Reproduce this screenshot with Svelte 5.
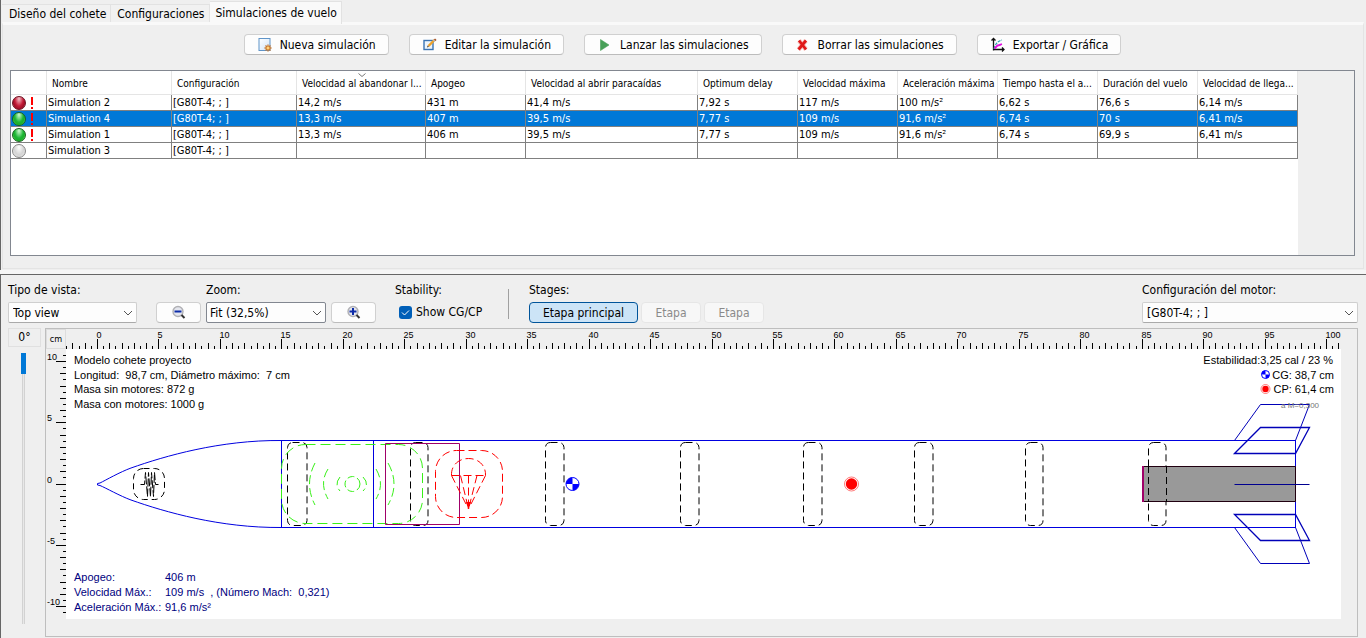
<script>
  const tabs = ['Diseño del cohete', 'Configuraciones', 'Simulaciones de vuelo'];
  const actions = [
    { icon: 'new', label: 'Nueva simulación' },
    { icon: 'edit', label: 'Editar la simulación' },
    { icon: 'run', label: 'Lanzar las simulaciones' },
    { icon: 'delete', label: 'Borrar las simulaciones' },
    { icon: 'plot', label: 'Exportar / Gráfica' }
  ];
  const columns = [
    { w: 36, t: '' },
    { w: 125, t: 'Nombre' },
    { w: 125, t: 'Configuración' },
    { w: 129, t: 'Velocidad al abandonar l...', sorted: true },
    { w: 100, t: 'Apogeo' },
    { w: 172, t: 'Velocidad al abrir paracaídas' },
    { w: 100, t: 'Optimum delay' },
    { w: 100, t: 'Velocidad máxima' },
    { w: 100, t: 'Aceleración máxima' },
    { w: 100, t: 'Tiempo hasta el a...' },
    { w: 100, t: 'Duración del vuelo' },
    { w: 100, t: 'Velocidad de llega...' }
  ];
  const rows = [
    { s: 'red', warn: true, c: ['Simulation 2', '[G80T-4; ; ]', '14,2 m/s', '431 m', '41,4 m/s', '7,92 s', '117 m/s', '100 m/s²', '6,62 s', '76,6 s', '6,14 m/s'] },
    { s: 'green', warn: true, sel: true, c: ['Simulation 4', '[G80T-4; ; ]', '13,3 m/s', '407 m', '39,5 m/s', '7,77 s', '109 m/s', '91,6 m/s²', '6,74 s', '70 s', '6,41 m/s'] },
    { s: 'green', warn: true, c: ['Simulation 1', '[G80T-4; ; ]', '13,3 m/s', '406 m', '39,5 m/s', '7,77 s', '109 m/s', '91,6 m/s²', '6,74 s', '69,9 s', '6,41 m/s'] },
    { s: 'gray', warn: false, c: ['Simulation 3', '[G80T-4; ; ]', '', '', '', '', '', '', '', '', ''] }
  ];

  // Ruler ticks every half centimetre
  const hTicks = [];
  for (let i = -5; i <= 202; i++) {
    const x = Math.floor(31.5 + i * 6.145) + 0.5;
    if (x < 1275) hTicks.push({ i, x, len: i % 10 === 0 ? 10 : i % 2 === 0 ? 6 : 3 });
  }
  const vTicks = [];
  for (let i = -21; i <= 21; i++) {
    vTicks.push({ i, y: Math.floor(135 - i * 6.125) + 0.5, len: i % 10 === 0 ? 10 : i % 2 === 0 ? 6 : 3 });
  }
  const rings = [[287, 20], [410, 18], [545, 19], [680, 19], [803, 19], [914, 19], [1025, 18], [1148, 18]];
</script>

{#snippet chevron()}
  <svg class="chev" width="10" height="6" viewBox="0 0 10 6"><path d="M1 1l4 4 4-4" fill="none" stroke="#555" /></svg>
{/snippet}

{#snippet lens(plus)}
  <svg width="16" height="16" viewBox="0 0 16 16">
    <circle cx="7" cy="6.5" r="5" fill="#e4e6ee" stroke="#b0b0b4" stroke-width="1.4" />
    <path d="M10.5 10l3 3" stroke="#333" stroke-width="2" />
    <path d="M3.5 6.5h7" stroke="#0c2ba8" stroke-width="2" />
    {#if plus}<path d="M7 3v7" stroke="#0c2ba8" stroke-width="2" />{/if}
  </svg>
{/snippet}

<div class="app">
  <section class="top">
    <div class="tabs" role="tablist">
      {#each tabs as t, i}
        <button role="tab" class="tab" class:active={i === 2} aria-selected={i === 2}>{t}</button>
      {/each}
    </div>
    <div class="panel">
      <div class="actions">
        {#each actions as a}
          <button class="btn action">
            <svg width="16" height="16" viewBox="0 0 16 16">
              {#if a.icon === 'new'}
                <defs><linearGradient id="pg" x2="1" y2="1"><stop stop-color="#fff" /><stop offset="1" stop-color="#cfe4fa" /></linearGradient></defs>
                <rect x="2" y="1.5" width="11" height="12" fill="url(#pg)" stroke="#5f94c8" />
                <path d="M11 7.500v7M7.500 11h7M8.500 8.500l5 5M13.500 8.500l-5 5" stroke="#c8762c" stroke-width="1.300" />
                <circle cx="11" cy="11" r="1.500" fill="#ffd27a" />
              {:else if a.icon === 'edit'}
                <rect x="2" y="3.500" width="9" height="9" fill="#eef5fc" stroke="#3a74b4" stroke-width="1.400" />
                <path d="M6.500 9L12.500 3" stroke="#eda22c" stroke-width="2.400" />
                <path d="M11.500 3l1.500 1.500" stroke="#b9c0c8" stroke-width="1.300" />
                <path d="M12.500 2l1.500 1.500" stroke="#a04a20" stroke-width="1.600" />
                <path d="M5 10.500l2-.8-1.300-1.300z" fill="#333" />
              {:else if a.icon === 'run'}
                <path d="M3.500 2.500v11l8.500-5.500z" fill="#48a058" stroke="#48a058" stroke-width=".6" />
              {:else if a.icon === 'delete'}
                <path d="M4 3.500l7 9M11 3.500l-7.500 9" stroke="#f6c4c0" stroke-width="4.500" />
                <path d="M4 3.500l7 9M11 3.500l-7.500 9" stroke="#e01818" stroke-width="2.800" />
              {:else}
                <path d="M3.500 13.500V1.500M1.500 3.500l2-2 2 2M3 12.500h11M12 10.500l2 2-2 2" fill="none" stroke="#111" stroke-width="1.300" />
                <path d="M4 12c1-5 4-8 8-9" fill="none" stroke="#2aa4b0" stroke-width="1.200" stroke-dasharray="3 1" />
                <path d="M4.500 11.500l3-3c2 0 3-1 4.500-1.500" fill="none" stroke="#e010e0" stroke-width="1.800" />
              {/if}
            </svg>
            <span>{a.label}</span>
          </button>
        {/each}
      </div>

      <div class="scroll">
        <div class="sheet">
          <table>
            <colgroup>{#each columns as c}<col style="width:{c.w}px" />{/each}</colgroup>
            <thead>
              <tr>
                {#each columns as c}
                  <th>
                    {c.t}
                    {#if c.sorted}<svg class="sort" width="8" height="5" viewBox="0 0 8 5"><path d="M.5.5l3.500 3 3.500-3" fill="none" stroke="#777" /></svg>{/if}
                  </th>
                {/each}
              </tr>
            </thead>
            <tbody>
              {#each rows as r}
                <tr class:sel={r.sel}>
                  <td class="status">
                    <span class="state"><span class="ball {r.s}"></span>
                    {#if r.warn}<svg width="4" height="12" viewBox="0 0 4 12"><path d="M1 0h2v8H1zM1 10h2v2H1z" fill="#f00" /></svg>{/if}</span>
                  </td>
                  {#each r.c as v}<td>{v}</td>{/each}
                </tr>
              {/each}
            </tbody>
          </table>
        </div>
      </div>
    </div>
  </section>

  <section class="bottom">
    <div class="toolbar">
      <div class="field view">
        <label for="view">Tipo de vista:</label>
        <div class="combo"><select id="view"><option>Top view</option></select>{@render chevron()}</div>
      </div>
      <div class="zoom">
        <label for="zoom">Zoom:</label>
        <button class="btn zo" aria-label="Alejar">{@render lens(false)}</button>
        <div class="combo dark"><select id="zoom"><option>Fit (32,5%)</option></select>{@render chevron()}</div>
        <button class="btn" aria-label="Acercar">{@render lens(true)}</button>
      </div>
      <div class="field stability">
        <span>Stability:</span>
        <label class="check">
          <span class="tick"><input type="checkbox" checked /><svg width="13" height="13" viewBox="0 0 13 13"><path d="M3 6.500l2.500 2.500 4.500-4.500" fill="none" stroke="#fff" /></svg></span>
          Show CG/CP
        </label>
      </div>
      <div class="rule"></div>
      <div class="field">
        <span>Stages:</span>
        <div class="stages">
          <button class="btn main">Etapa principal</button>
          <button class="btn" disabled>Etapa</button>
          <button class="btn" disabled>Etapa</button>
        </div>
      </div>
      <div class="field motor">
        <label for="motor">Configuración del motor:</label>
        <div class="combo"><select id="motor"><option>[G80T-4; ; ]</option></select>{@render chevron()}</div>
      </div>
    </div>

    <div class="design">
      <div class="rotation">
        <label class="deg" for="rot">0°</label>
        <input id="rot" type="range" min="0" max="360" value="0" />
      </div>
      <div class="view-pane">
        <div class="unit">cm</div>
        <svg class="ruler" width="1275" height="20">
          {#each hTicks as t}
            <path d="M{t.x} {20 - t.len}V20" stroke="#000" />
            {#if t.len === 10}<text x={t.x - 1} y="9">{t.i / 2}</text>{/if}
          {/each}
        </svg>
        <svg class="ruler" width="20" height="270">
          {#each vTicks as t}
            <path d="M{20 - t.len} {t.y}H20" stroke="#000" />
            {#if t.len === 10}<text x="1" y={t.y - 1.5}>{t.i / 2}</text>{/if}
          {/each}
        </svg>
        <svg class="canvas" width="1275" height="270" viewBox="66 349 1275 270">
          <g fill="none" stroke="#0000e0">
            <path d="M281.500 440.500C220 440 165 456 131 468C120 472 106 480 100 483L97.500 483.500V485L100 485.500C106 488 120 496 131 500C165 512 220 528 281.500 527.500" />
            <path d="M281.500 440.500H1295.500V527.500H281.500zM373.500 440.500v87" shape-rendering="crispEdges" />
          </g>
          <g fill="none" stroke="#000" stroke-dasharray="7 4">
            {#each rings as [x, w]}
              <rect x={x + 0.5} y="442.500" width={w - 0.5} height="83" rx="5" />
            {/each}
            <rect x="133.500" y="468.500" width="31" height="31" rx="10" stroke-dasharray="6 4" />
            <path d="M140.500 484.500h4l1-12l2 24l1-24l2 24l1-24l2 24l1-24l1 12h3" stroke-dasharray="8 2" />
          </g>
          <g fill="none" stroke="#38f018" stroke-dasharray="10 5">
            <rect x="281.500" y="444.500" width="141" height="79" rx="24" />
            <circle cx="352.500" cy="484" r="7.500" stroke-dasharray="7 3" />
            <path d="M340 477q-6 7 0 14M328 469q-9 14 0 30M315 463q-11 21 0 42M363 477q7 7 0 14M376 469q9 15 0 30M388 463q12 21 0 42" stroke-dasharray="9 4" />
          </g>
          <path d="M385.500 443.500h74v81h-74z" fill="none" stroke="#a00068" />
          <g fill="none" stroke="#f00" stroke-dasharray="8 4">
            <rect x="435.500" y="450.500" width="67" height="67" rx="21" />
            <path d="M451.500 475.500C451 465 459 458.500 468.500 458.500S486 465 485.500 475.500" />
            <path d="M451.500 475.500h34M451.500 475.500L468.500 509M460.500 475.500L468.500 509M468.500 475.500V509M477 475.500L468.500 509M485.500 475.500L468.500 509" />
          </g>
          <path d="M466 502l2.500 7 2.500-7z" fill="#f00" />

          <path d="M1143.500 466.500h152v35h-152z" fill="#999" stroke="#200010" />
          <path d="M1143 466v36" stroke="#a00068" stroke-width="2" />
          <path d="M1148.500 466v36M1166.500 466v36" stroke="#000" stroke-dasharray="7 4" />
          <g fill="none" stroke="#0000b8">
            <path d="M1234.500 440.500L1260.500 404.500H1309.500L1295.500 440.500M1234.500 527.500L1260.500 563.500H1309.500L1295.500 527.500" />
            <path d="M1234.500 453.500L1260.500 427.500H1309.500L1295.500 453.500zM1234.500 514.500H1295.500L1309.500 540.500H1260.500z" stroke-width="1.300" />
            <path d="M1234.500 484.500h75" stroke="#000090" />
          </g>

          {#each [[572.5, 484, 6.5], [1265.5, 374.5, 4]] as [x, y, r]}
            <circle cx={x} cy={y} {r} fill="#fff" stroke="#00f" />
            <path d="M{x} {y}V{y - r}A{r} {r} 0 0 0 {x - r} {y}zM{x} {y}V{y + r}A{r} {r} 0 0 0 {x + r} {y}z" fill="#00f" />
          {/each}
          {#each [[851.5, 484, 7], [1265.5, 389, 4.5]] as [x, y, r]}
            <circle cx={x} cy={y} {r} fill="#fff" stroke="#f44" stroke-width=".7" />
            <circle cx={x} cy={y} r={r - 1.3} fill="#f00" />
          {/each}

          <g class="note">
            <text x="74" y="364">Modelo cohete proyecto</text>
            <text x="74" y="379">Longitud:&nbsp; 98,7 cm, Diámetro máximo:&nbsp; 7 cm</text>
            <text x="74" y="393">Masa sin motores: 872 g</text>
            <text x="74" y="408">Masa con motores: 1000 g</text>
            <g text-anchor="end">
              <text x="1333" y="364">Estabilidad:3,25 cal / 23 %</text>
              <text x="1334" y="379">CG: 38,7 cm</text>
              <text x="1334" y="393">CP: 61,4 cm</text>
            </g>
            <text class="mach" x="1281" y="408">a M=0,300</text>
            <g fill="#000080">
              <text x="74" y="581">Apogeo:</text>
              <text x="165" y="581">406 m</text>
              <text x="74" y="596">Velocidad Máx.:</text>
              <text x="165" y="596">109 m/s&nbsp; , (Número Mach:&nbsp; 0,321)</text>
              <text x="74" y="611">Aceleración Máx.:</text>
              <text x="165" y="611">91,6 m/s²</text>
            </g>
          </g>
        </svg>
      </div>
    </div>
  </section>
</div>

<style>
  :global(body) { margin: 0; background: #efefef; }
  .app, .app button, .app select {
    font-family: "DejaVu Sans Condensed", "DejaVu Sans", sans-serif;
    font-size: 12px;
    color: #000;
  }
  .app * { box-sizing: border-box; }
  .app { min-height: 100vh; box-sizing: border-box; display: flex; flex-direction: column; gap: 4px; background: #f6f6f6; }
  svg { display: block; flex: none; }

  .top { background: #efefef; border-left: 1px solid #666; padding: 0 2px 1px 1px; flex: none; }
  .tabs { display: flex; align-items: flex-end; height: 22px; padding-top: 1px; }
  .tab { border: 1px solid #e2e2e2; border-width: 1px 1px 0 0; background: #f1f1f1; height: 18px; padding: 0 4px 0 6px; line-height: 18px; white-space: nowrap; }
  .tab:first-child { padding-left: 7px; }
  .tab.active { height: 23px; align-self: flex-start; background: #f9f9f9; line-height: 20px; }
  .panel { border: 1px solid #e4e4e4; border-top: 3px solid #f9f9f9; padding: 9px 8px 12px 7px; }
  .actions { display: flex; justify-content: center; gap: 20px; margin-bottom: 15px; }
  .btn { height: 21px; border: 1px solid #d0d0d0; border-bottom-color: #bcbcbc; border-radius: 4px; background: #fdfdfd; padding: 0 12px; display: flex; align-items: center; justify-content: center; white-space: nowrap; }
  .action { gap: 7px; }

  .scroll { border: 1px solid #828790; height: 186px; }
  .sheet { width: 1287px; height: 100%; background: #fff; }
  table { table-layout: fixed; width: 1287px; border-collapse: separate; border-spacing: 0; font-size: 11px; }
  th { height: 24px; padding: 2px 0 0 5px; border-right: 1px solid #e5e5e5; border-bottom: 1px solid #e5e5e5; text-align: left; font-size: 10px; font-weight: 400; white-space: nowrap; position: relative; }
  .sort { position: absolute; top: 2px; left: 61px; }
  td { height: 16px; line-height: 15px; padding: 0 0 0 1px; border-right: 1px solid #808080; border-bottom: 1px solid #808080; white-space: nowrap; overflow: hidden; }
  .sel td { background: #0078d7; color: #fff; }
  .state { display: flex; align-items: center; gap: 4px; height: 15px; }
  .ball { width: 14px; height: 14px; border-radius: 50%; border: 1px solid #555; }
  .red { background: radial-gradient(ellipse at 50% 15%, #f5c0c8, #c41c38 50%, #a01028 70%, #e05060); border-color: #6c1020; }
  .green { background: radial-gradient(ellipse at 50% 15%, #d0f8d0, #20b838 50%, #18b028 65%, #80f080); border-color: #186020; }
  .gray { background: radial-gradient(ellipse at 50% 20%, #fff, #d4d4d4 55%, #eee); border-color: #888; }

  .bottom { flex: 1; display: flex; flex-direction: column; background: #efefef; border-left: 1px solid #666; border-top: 1px solid #666; padding: 8px 8px 1px 7px; }
  .toolbar { display: flex; margin-bottom: 5px; }
  .field { display: flex; flex-direction: column; gap: 4px; line-height: 15px; }
  .view { width: 129px; }
  .zoom { display: grid; grid-template-columns: 45px 120px 45px; gap: 4px 5px; margin-left: 19px; line-height: 15px; }
  .zoom label { grid-column: 2 / 4; }
  .zo { grid-column: 1; }
  .zoom .btn { padding: 0; }
  .combo { display: grid; align-items: center; }
  .combo select { grid-area: 1 / 1; appearance: none; width: 100%; height: 21px; border: 1px solid #cfcfcf; border-bottom-color: #aaa; border-radius: 2px; background: #fdfdfd; padding: 0 4px; }
  .combo.dark select { border-color: #828790; padding: 0 3px; }
  .chev { grid-area: 1 / 1; justify-self: end; margin-right: 4px; pointer-events: none; }
  .stability { margin-left: 19px; width: 94px; }
  .check { display: flex; align-items: center; gap: 4px; height: 21px; margin-left: 4px; white-space: nowrap; }
  .tick { display: grid; flex: none; }
  .tick input { grid-area: 1 / 1; appearance: none; margin: 0; width: 13px; height: 13px; border-radius: 3px; background: #005fb8; }
  .tick svg { grid-area: 1 / 1; pointer-events: none; }
  .rule { width: 1px; height: 30px; margin: 6px 20px 0 19px; background: #a0a0a0; }
  .stages { display: flex; gap: 3px; }
  .stages .main { background: #cce4f7; border: 1px solid #00549a; width: 109px; }
  .stages .btn:disabled { color: #8a8a8a; background: #f7f7f7; border-color: #e6e6e6; width: 60px; }
  .motor { margin-left: auto; width: 216px; }

  .design { flex: 1; display: flex; gap: 4px; }
  .rotation { width: 33px; display: flex; flex-direction: column; align-items: center; gap: 6px; padding-bottom: 13px; }
  .deg { width: 33px; height: 19px; border: 1px solid #e0e0e0; line-height: 17px; text-align: center; }
  #rot { appearance: none; writing-mode: vertical-lr; flex: 1; width: 5px; min-height: 0; margin: 0; margin-right: 2px; background: linear-gradient(90deg, transparent 1px, #d2d2d2 1px 2px, #e8e8e8 2px 3px, #d2d2d2 3px 4px, transparent 4px); }
  #rot::-webkit-slider-thumb { appearance: none; width: 5px; height: 21px; background: #0078d7; }
  .view-pane { flex: 1; min-width: 0; overflow: hidden; border: 1px solid #bebebe; display: grid; grid-template-columns: 20px 1275px; grid-template-rows: 20px 270px; align-content: start; padding-bottom: 16px; }
  .unit { border: 1px solid #ddd; font: 9px/19px "DejaVu Sans Condensed", sans-serif; text-align: center; }
  .ruler { font: 9px "Liberation Sans", Arial, sans-serif; }
  .canvas { background: #fff; }
  .note { font: 11px "Liberation Sans", Arial, sans-serif; }
  .mach { font-size: 8px; fill: #777; }
</style>
